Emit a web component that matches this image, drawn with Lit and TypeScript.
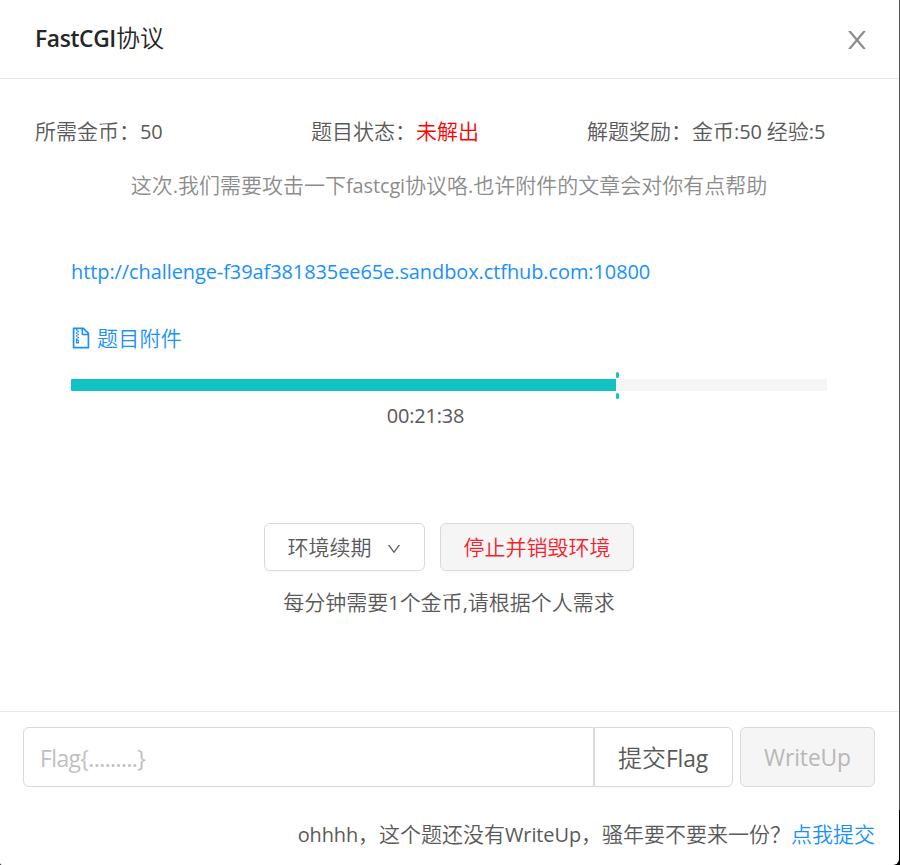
import { LitElement, html, css, svg } from "lit";
import { customElement, property, state } from "lit/decorators.js";

const ICONS: Record<string, string> = {
  close:
    "M563.8 512l262.5-312.9c4.4-5.2.7-13.1-6.1-13.1h-79.8c-4.7 0-9.2 2.1-12.3 5.7L511.6 449.8 295.1 191.7c-3-3.6-7.5-5.7-12.3-5.7H203c-6.8 0-10.5 7.9-6.1 13.1L459.4 512 196.9 824.9A7.95 7.95 0 0 0 203 838h79.8c4.7 0 9.2-2.1 12.3-5.7l216.5-258.1 216.5 258.1c3 3.6 7.5 5.7 12.3 5.7h79.8c6.8 0 10.5-7.9 6.1-13.1L563.8 512z",
  zip: "M296 392h64v64h-64zm0 190v160h128V582h-64v-62h-64v62zm80 48v64h-32v-64h32zm-16-302h64v64h-64zm-64-64h64v64h-64zm64 192h64v64h-64zm0-256h64v64h-64zm494.6 88.7L639.4 73.4c-6-6-14.1-9.4-22.6-9.4H192c-17.7 0-32 14.3-32 32v832c0 17.7 14.3 32 32 32h640c17.7 0 32-14.3 32-32V311.3c0-8.5-3.4-16.7-9.4-22.7zM790.2 326H602V137.8L790.2 326zm1.8 562H232V136h64v64h64v-64h174v216a42 42 0 0 0 42 42h216v494z",
  down: "M884 256h-75c-5.1 0-9.9 2.5-12.9 6.6L512 654.2 227.9 262.6c-3-4.1-7.8-6.6-12.9-6.6h-75c-6.5 0-10.3 7.4-6.5 12.7l352.6 486.1c12.8 17.6 39 17.6 51.7 0l352.6-486.1c3.9-5.3.1-12.7-6.4-12.7z",
};

@customElement("ui-icon")
class UiIcon extends LitElement {
  @property() name = "close";

  static styles = css`
    :host {
      display: inline-flex;
    }
    .glyph {
      width: 100%;
      height: 100%;
      fill: currentColor;
    }
  `;

  render() {
    return html`<svg class="glyph" viewBox="0 0 1024 1024">
      ${svg`<path d=${ICONS[this.name]}></path>`}
    </svg>`;
  }
}

/* Sets runs of Latin text slightly smaller than the Chinese text around them. */
const mixed = (text: string) =>
  text
    .split(/([\x20-\x7e]+)/)
    .filter(Boolean)
    .map((run) => (/^[\x20-\x7e]/.test(run) ? html`<span class="latin">${run}</span>` : run));

@customElement("app-root")
class AppRoot extends LitElement {
  @state() private percent = 72.15;

  static styles = css`
    :host {
      display: block;
      width: 900px;
      height: 865px;
      background: linear-gradient(#555 810px, #000 810px);
      overflow: hidden;
    }
    * {
      box-sizing: border-box;
    }
    .modal {
      display: flex;
      flex-direction: column;
      width: 899px;
      height: 865px;
      background: #fff;
      border-radius: 0 0 6px 2px;
      color: #595959;
      font: 350 21px/32px "Noto Sans", "Noto Sans CJK SC", sans-serif;
      white-space: nowrap;
    }
    .latin {
      font-family: "Open Sans", "Noto Sans", sans-serif;
      font-weight: 380;
      font-size: 0.95em;
      line-height: 0;
      letter-spacing: -0.1px;
      white-space: pre;
    }
    .head {
      display: flex;
      align-items: center;
      justify-content: space-between;
      height: 79px;
      padding: 0 28px 0 35px;
      border-bottom: 1px solid #e8e8e8;
      color: #262626;
      font-size: 24px;
    }
    .title {
      margin-top: -2px;
    }
    .head .latin {
      font-weight: 550;
      letter-spacing: -0.35px;
    }
    .close {
      width: 28px;
      height: 28px;
      margin-top: 2px;
      color: #8c8c8c;
    }
    .body {
      height: 632px;
      padding: 36px 36px 0 35px;
    }
    .facts {
      display: grid;
      grid-template-columns: repeat(3, 276px);
    }
    .unsolved {
      color: #f00;
    }
    .desc {
      margin-top: 22px;
      text-align: center;
      color: #8c8c8c;
    }
    .env {
      display: flex;
      flex-direction: column;
      padding: 54px 36px 0;
    }
    .link {
      color: #1890ff;
      text-decoration: none;
    }
    .url .latin {
      letter-spacing: -0.065px;
    }
    .attach {
      display: flex;
      align-items: center;
      gap: 4px;
      margin-top: 35px;
      letter-spacing: 0.25px;
    }
    .zip {
      width: 24px;
      height: 24px;
      margin-left: -2px;
    }
    .track {
      position: relative;
      height: 12px;
      margin-top: 25px;
      background: #f5f5f5;
    }
    .fill {
      height: 12px;
      background: #13c2c2;
      border-radius: 1px 0 0 1px;
    }
    .mark {
      position: absolute;
      top: -7px;
      width: 3px;
      height: 27px;
      display: flex;
      flex-direction: column;
      justify-content: space-between;
    }
    .tick {
      height: 6px;
      border-radius: 1.5px;
      background: #13c2c2;
    }
    .time {
      margin: 8px 47px 0 0;
      text-align: center;
    }
    .time .latin {
      letter-spacing: -0.2px;
    }
    .actions {
      display: flex;
      justify-content: center;
      gap: 15px;
      margin-top: 92px;
    }
    .btn {
      display: flex;
      align-items: center;
      justify-content: center;
      height: 48px;
      border: 1px solid #d9d9d9;
      border-radius: 6px;
      background: #fff;
      box-shadow: 0 2px 0 rgba(0, 0, 0, 0.015);
      color: #595959;
      font: inherit;
      padding: 0;
    }
    .renew {
      width: 161px;
      gap: 14px;
    }
    .down {
      width: 16px;
      height: 16px;
      margin-top: 3px;
    }
    .stop {
      width: 194px;
      background: #f5f5f5;
      color: #f5222d;
    }
    .hint {
      margin-top: 15px;
      text-align: center;
    }
    .foot {
      height: 154px;
      border-top: 1px solid #e8e8e8;
      padding: 15px 24px 0 23px;
    }
    .form {
      display: flex;
    }
    .flag {
      width: 571px;
      height: 60px;
      padding: 2px 16px 0;
      border: 1px solid #d9d9d9;
      border-radius: 6px 0 0 6px;
      background: #fff;
      font: 380 22.8px "Open Sans", "Noto Sans", sans-serif;
      letter-spacing: -0.55px;
      outline: none;
    }
    .flag::placeholder {
      color: #bfbfbf;
      opacity: 1;
    }
    .submit {
      width: 139px;
      height: 60px;
      padding: 1px 1px 0 0;
      border-radius: 0 6px 6px 0;
      font-size: 24px;
    }
    .writeup {
      width: 135px;
      height: 60px;
      padding-top: 2px;
      margin-left: 7px;
      background: #f5f5f5;
      color: #b8b8b8;
      font-size: 24px;
      box-shadow: none;
    }
    .note {
      margin-top: 31px;
      text-align: right;
    }
  `;

  render() {
    return html`
      <div class="modal">
        <div class="head">
          <span class="title">${mixed("FastCGI协议")}</span>
          <ui-icon class="close" name="close"></ui-icon>
        </div>
        <div class="body">
          <div class="facts">
            <span>${mixed("所需金币：50")}</span>
            <span>题目状态：<span class="unsolved">未解出</span></span>
            <span>${mixed("解题奖励：金币:50 经验:5")}</span>
          </div>
          <div class="desc">
            ${mixed("这次.我们需要攻击一下fastcgi协议咯.也许附件的文章会对你有点帮助")}
          </div>
          <div class="env">
            <a class="link url">${mixed("http://challenge-f39af381835ee65e.sandbox.ctfhub.com:10800")}</a>
            <a class="link attach"><ui-icon class="zip" name="zip"></ui-icon>题目附件</a>
            <div class="track">
              <div class="fill" style="width:${this.percent}%"></div>
              <div class="mark" style="left:${this.percent}%">
                <div class="tick"></div>
                <div class="tick"></div>
              </div>
            </div>
            <div class="time">${mixed("00:21:38")}</div>
          </div>
          <div class="actions">
            <button class="btn renew">环境续期<ui-icon class="down" name="down"></ui-icon></button>
            <button class="btn stop">停止并销毁环境</button>
          </div>
          <div class="hint">${mixed("每分钟需要1个金币,请根据个人需求")}</div>
        </div>
        <div class="foot">
          <div class="form">
            <input class="flag" placeholder="Flag{.........}" />
            <button class="btn submit"><span>${mixed("提交Flag")}</span></button>
            <button class="btn writeup" disabled>${mixed("WriteUp")}</button>
          </div>
          <div class="note">
            ${mixed("ohhhh，这个题还没有WriteUp，骚年要不要来一份？")}<a class="link">点我提交</a>
          </div>
        </div>
      </div>
    `;
  }
}
